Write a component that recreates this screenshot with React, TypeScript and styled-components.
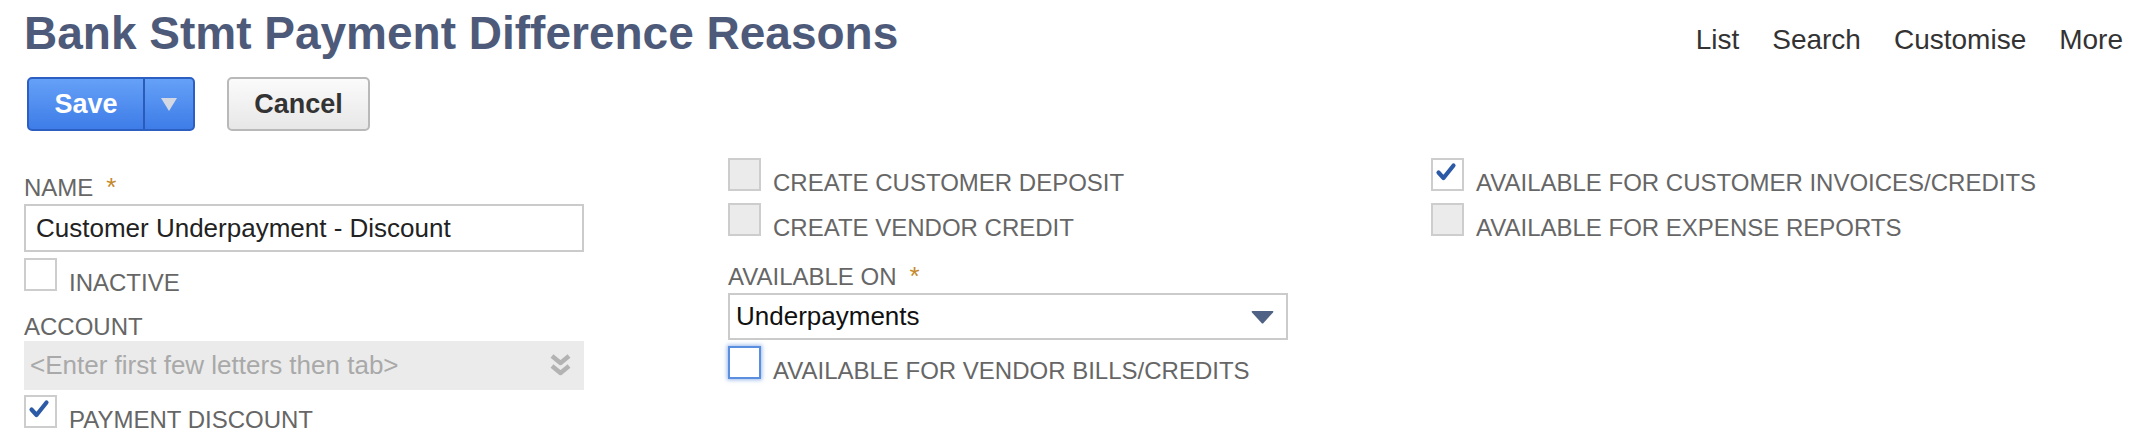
import React from 'react'
import styled, { createGlobalStyle } from 'styled-components'

const GlobalStyle = createGlobalStyle`
  body {
    margin: 0;
    background: #fff;
    font-family: "Liberation Sans", Arial, sans-serif;
  }
`

type BoxKind = 'plain' | 'disabled' | 'focus'

const TickIcon = () => (
  <svg width="29" height="29" viewBox="0 0 29 29" style={{ display: 'block' }}>
    <path d="M5.5 12.5 L10.5 18 L20.5 5.5" fill="none" stroke="#2c5aa6" strokeWidth="4.2" strokeLinecap="round" strokeLinejoin="round" />
  </svg>
)

const Checkbox = ({ kind = 'plain', checked = false }: { kind?: BoxKind; checked?: boolean }) => (
  <Box $kind={kind}>{checked && <TickIcon />}</Box>
)

const CheckField = ({ label, kind, checked, gap = 0 }: { label: string; kind?: BoxKind; checked?: boolean; gap?: number }) => (
  <CheckRow $gap={gap}>
    <Checkbox kind={kind} checked={checked} />
    <CheckLabel>{label}</CheckLabel>
  </CheckRow>
)

const App = () => {
  return (
    <Page>
      <GlobalStyle />
      <Header>
        <Title>Bank Stmt Payment Difference Reasons</Title>
        <Nav>
          <NavLink>List</NavLink>
          <NavLink>Search</NavLink>
          <NavLink>Customise</NavLink>
          <NavLink>More</NavLink>
        </Nav>
      </Header>

      <Toolbar>
        <SplitButton>
          <SaveMain>Save</SaveMain>
          <SaveMenu>
            <svg width="16" height="13" viewBox="0 0 16 13">
              <path d="M0 0 H16 L8 13 Z" fill="#d3d8e2" />
            </svg>
          </SaveMenu>
        </SplitButton>
        <CancelButton>Cancel</CancelButton>
      </Toolbar>

      <Form>
        <Column>
          <FieldLabel $gap={15}>
            NAME<Required>*</Required>
          </FieldLabel>
          <TextInput>Customer Underpayment - Discount</TextInput>
          <CheckField label="INACTIVE" gap={6} />
          <FieldLabel $gap={22}>ACCOUNT</FieldLabel>
          <ComboBox>
            <Placeholder>&lt;Enter first few letters then tab&gt;</Placeholder>
            <svg width="25" height="25" viewBox="0 0 25 25">
              <path d="M4 3 L12.5 10 L21 3" fill="none" stroke="#b3b3b3" strokeWidth="4.5" strokeLinejoin="round" />
              <path d="M4 13 L12.5 20 L21 13" fill="none" stroke="#b3b3b3" strokeWidth="4.5" strokeLinejoin="round" />
            </svg>
          </ComboBox>
          <CheckField label="PAYMENT DISCOUNT" checked gap={5} />
        </Column>

        <Column>
          <CheckField label="CREATE CUSTOMER DEPOSIT" kind="disabled" />
          <CheckField label="CREATE VENDOR CREDIT" kind="disabled" gap={12} />
          <FieldLabel $gap={26}>
            AVAILABLE ON<Required>*</Required>
          </FieldLabel>
          <SelectBox>
            <span>Underpayments</span>
            <svg width="23" height="14" viewBox="0 0 23 14">
              <path d="M1.5 1 H21.5 Q23 1 22 2.5 L12.5 13 Q11.5 14 10.5 13 L1 2.5 Q0 1 1.5 1 Z" fill="#4f6184" />
            </svg>
          </SelectBox>
          <CheckField label="AVAILABLE FOR VENDOR BILLS/CREDITS" kind="focus" gap={6} />
        </Column>

        <Column>
          <CheckField label="AVAILABLE FOR CUSTOMER INVOICES/CREDITS" checked />
          <CheckField label="AVAILABLE FOR EXPENSE REPORTS" kind="disabled" gap={12} />
        </Column>
      </Form>
    </Page>
  )
}

const Page = styled.div`
  padding: 0 25px 0 24px;
`

const Header = styled.div`
  display: flex;
  justify-content: space-between;
  align-items: baseline;
  padding-top: 5px;
`

const Title = styled.h1`
  margin: 0;
  font-size: 46px;
  line-height: 56px;
  font-weight: bold;
  color: #4e5a79;
`

const Nav = styled.div`
  display: flex;
  gap: 33px;
`

const NavLink = styled.span`
  font-size: 28px;
  color: #333;
`

const Toolbar = styled.div`
  display: flex;
  gap: 32px;
  margin-top: 16px;
  padding-left: 3px;
`

const SplitButton = styled.div`
  display: flex;
  height: 54px;
  box-sizing: border-box;
  border: 2px solid #2d5fc2;
  border-radius: 5px;
  overflow: hidden;
  background: linear-gradient(#65a1f7, #3e7ce8);
`

const SaveMain = styled.div`
  width: 114px;
  display: flex;
  align-items: center;
  justify-content: center;
  font-size: 27px;
  font-weight: bold;
  color: #fff;
`

const SaveMenu = styled.div`
  width: 48px;
  display: flex;
  align-items: center;
  justify-content: center;
  border-left: 2px solid #2a5bb9;
`

const CancelButton = styled.div`
  width: 143px;
  height: 54px;
  box-sizing: border-box;
  display: flex;
  align-items: center;
  justify-content: center;
  border: 2px solid #b9b9b9;
  border-radius: 5px;
  background: linear-gradient(#fbfbfb, #e7e7e7);
  font-size: 27px;
  font-weight: bold;
  color: #333;
`

const Form = styled.div`
  display: grid;
  grid-template-columns: 704px 703px 1fr;
  margin-top: 27px;
`

const Column = styled.div`
  display: flex;
  flex-direction: column;
  align-items: flex-start;
`

const FieldLabel = styled.div<{ $gap: number }>`
  margin-top: ${p => p.$gap}px;
  font-size: 24px;
  line-height: 28px;
  color: #666;
`

const Required = styled.span`
  margin-left: 13px;
  font-size: 26px;
  color: #c4892c;
`

const fieldBox = `
  width: 560px;
  box-sizing: border-box;
  display: flex;
  align-items: center;
  justify-content: space-between;
  font-size: 26px;
`

const TextInput = styled.div`
  ${fieldBox}
  height: 48px;
  margin-top: 2px;
  padding: 0 10px;
  border: 2px solid #cbcbcb;
  color: #222;
`

const ComboBox = styled.div`
  ${fieldBox}
  height: 49px;
  padding: 0 11px 0 6px;
  background: #ebebeb;
`

const Placeholder = styled.span`
  color: #a9a9a9;
`

const SelectBox = styled.div`
  ${fieldBox}
  height: 47px;
  margin-top: 2px;
  padding: 0 12px 0 6px;
  border: 2px solid #cbcbcb;
  color: #111;
`

const CheckRow = styled.div<{ $gap: number }>`
  display: flex;
  align-items: flex-end;
  gap: 12px;
  margin-top: ${p => p.$gap}px;
`

const Box = styled.span<{ $kind: BoxKind }>`
  display: block;
  width: 33px;
  height: 33px;
  box-sizing: border-box;
  padding: 0;
  border: 2px solid ${p => (p.$kind === 'focus' ? '#5a8fe0' : '#cdcdcd')};
  background: ${p => (p.$kind === 'disabled' ? '#ebebeb' : '#fff')};
  box-shadow: ${p => (p.$kind === 'focus' ? '0 0 4px 1px rgba(74, 130, 220, 0.55)' : 'none')};
`

const CheckLabel = styled.span`
  font-size: 24px;
  line-height: 24px;
  margin-bottom: -4px;
  color: #666;
`

export default App
